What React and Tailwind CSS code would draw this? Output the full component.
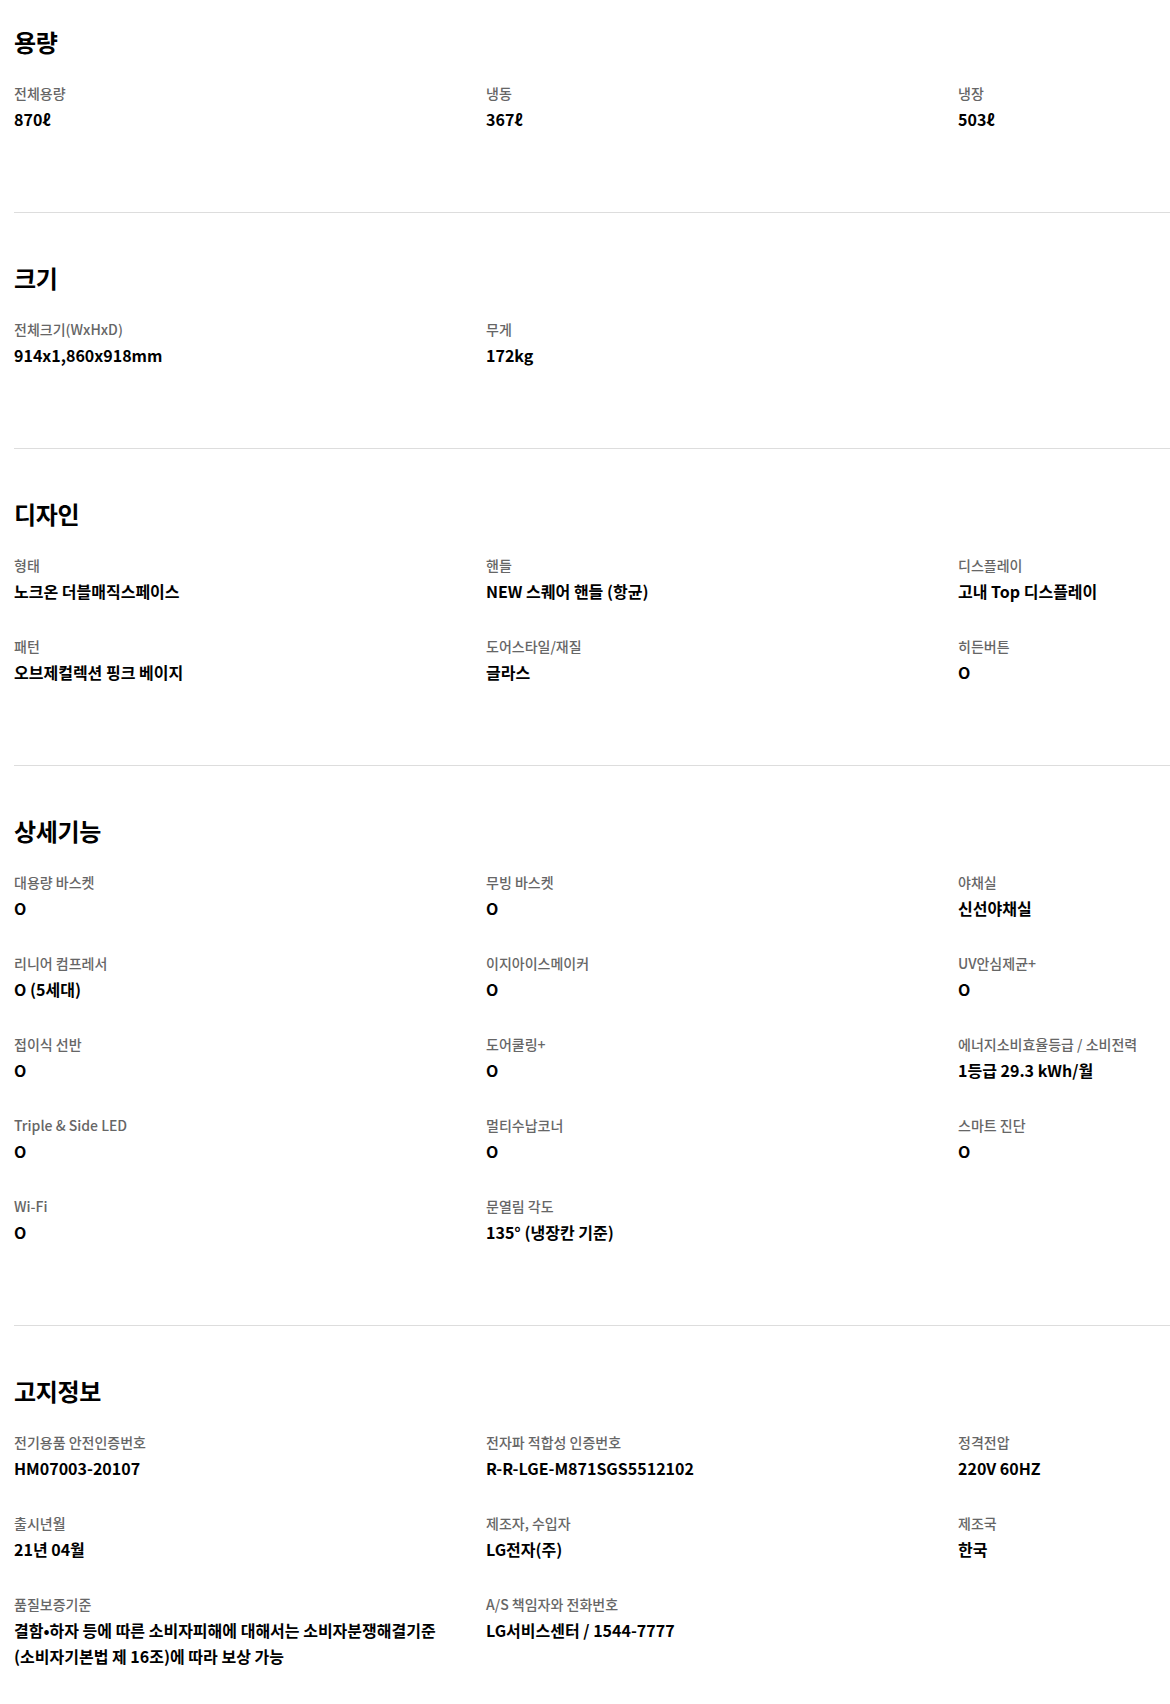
import React from "react";

const sections = [
  {
    title: "용량",
    items: [
      ["전체용량", "870ℓ"],
      ["냉동", "367ℓ"],
      ["냉장", "503ℓ"],
    ],
  },
  {
    title: "크기",
    items: [
      ["전체크기(WxHxD)", "914x1,860x918mm"],
      ["무게", "172kg"],
    ],
  },
  {
    title: "디자인",
    items: [
      ["형태", "노크온 더블매직스페이스"],
      ["핸들", "NEW 스퀘어 핸들 (항균)"],
      ["디스플레이", "고내 Top 디스플레이"],
      ["패턴", "오브제컬렉션 핑크 베이지"],
      ["도어스타일/재질", "글라스"],
      ["히든버튼", "O"],
    ],
  },
  {
    title: "상세기능",
    items: [
      ["대용량 바스켓", "O"],
      ["무빙 바스켓", "O"],
      ["야채실", "신선야채실"],
      ["리니어 컴프레서", "O (5세대)"],
      ["이지아이스메이커", "O"],
      ["UV안심제균+", "O"],
      ["접이식 선반", "O"],
      ["도어쿨링+", "O"],
      ["에너지소비효율등급 / 소비전력", "1등급 29.3 kWh/월"],
      ["Triple & Side LED", "O"],
      ["멀티수납코너", "O"],
      ["스마트 진단", "O"],
      ["Wi-Fi", "O"],
      ["문열림 각도", "135° (냉장칸 기준)"],
    ],
  },
  {
    title: "고지정보",
    items: [
      ["전기용품 안전인증번호", "HM07003-20107"],
      ["전자파 적합성 인증번호", "R-R-LGE-M871SGS5512102"],
      ["정격전압", "220V 60HZ"],
      ["출시년월", "21년 04월"],
      ["제조자, 수입자", "LG전자(주)"],
      ["제조국", "한국"],
      [
        "품질보증기준",
        <>
          결함•하자 등에 따른 소비자피해에 대해서는 소비자분쟁해결기준
          <br />
          (소비자기본법 제 16조)에 따라 보상 가능
        </>,
      ],
      ["A/S 책임자와 전화번호", "LG서비스센터 / 1544-7777"],
    ],
  },
];

function Section({ title, items, first, last }) {
  return (
    <section
      className={
        (first ? "pt-[26px] " : "pt-[49px] ") +
        (last ? "pb-[40px]" : "pb-[80px] border-b border-[#dddddd]")
      }
    >
      <h3 className="text-[24px] leading-[32px] font-bold text-black tracking-[-0.3px]">
        {title}
      </h3>
      <div className="mt-[25px] grid grid-cols-[472px_472px_1fr] gap-y-[32px]">
        {items.map(([label, value], i) => (
          <div key={i} className="pr-[20px]">
            <div className="text-[14px] leading-[20px] font-medium text-[#666666]">
              {label}
            </div>
            <div className="mt-[3px] text-[16px] leading-[26px] font-bold text-black">
              {value}
            </div>
          </div>
        ))}
      </div>
    </section>
  );
}

export default function App() {
  return (
    <div
      className="w-[1170px] bg-white pl-[14px]"
      style={{ fontFamily: '"Noto Sans CJK KR", "Noto Sans", sans-serif' }}
    >
      {sections.map((s, i) => (
        <Section
          key={i}
          title={s.title}
          items={s.items}
          first={i === 0}
          last={i === sections.length - 1}
        />
      ))}
    </div>
  );
}
